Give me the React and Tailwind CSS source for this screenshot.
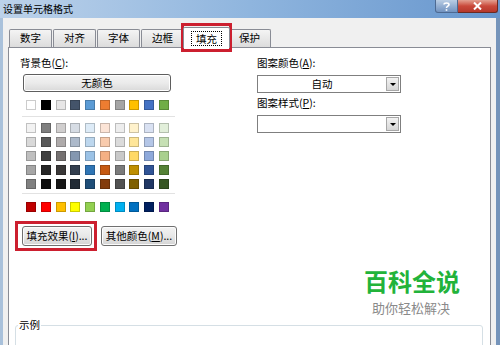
import React from "react";

const theme = ["bg-[#ffffff]", "bg-[#000000]", "bg-[#e7e6e6]", "bg-[#44546a]", "bg-[#5b9bd5]", "bg-[#ed7d31]", "bg-[#a5a5a5]", "bg-[#ffc000]", "bg-[#4472c4]", "bg-[#70ad47]"];
const shades = [
  "bg-[#f2f2f2]", "bg-[#7f7f7f]", "bg-[#d0cece]", "bg-[#d6dce4]", "bg-[#ddebf7]", "bg-[#fce4d6]", "bg-[#ededed]", "bg-[#fff2cc]", "bg-[#d9e1f2]", "bg-[#e2efda]",
  "bg-[#d9d9d9]", "bg-[#595959]", "bg-[#aeaaaa]", "bg-[#acb9ca]", "bg-[#bdd7ee]", "bg-[#f8cbad]", "bg-[#dbdbdb]", "bg-[#ffe699]", "bg-[#b4c6e7]", "bg-[#c6e0b4]",
  "bg-[#bfbfbf]", "bg-[#404040]", "bg-[#757171]", "bg-[#8497b0]", "bg-[#9bc2e6]", "bg-[#f4b084]", "bg-[#c9c9c9]", "bg-[#ffd966]", "bg-[#8ea9db]", "bg-[#a9d08e]",
  "bg-[#a6a6a6]", "bg-[#262626]", "bg-[#3a3838]", "bg-[#333f4f]", "bg-[#2f75b5]", "bg-[#c65911]", "bg-[#7b7b7b]", "bg-[#bf8f00]", "bg-[#305496]", "bg-[#548235]",
  "bg-[#808080]", "bg-[#0d0d0d]", "bg-[#161616]", "bg-[#222b35]", "bg-[#1f4e78]", "bg-[#833c0c]", "bg-[#525252]", "bg-[#806000]", "bg-[#203764]", "bg-[#375623]",
];
const standard = ["bg-[#c00000]", "bg-[#ff0000]", "bg-[#ffc000]", "bg-[#ffff00]", "bg-[#92d050]", "bg-[#00b050]", "bg-[#00b0f0]", "bg-[#0070c0]", "bg-[#002060]", "bg-[#7030a0]"];

function Swatches({ colors }) {
  return (
    <div className="ml-[6px] grid grid-cols-[repeat(10,10px)] gap-x-[4.78px] gap-y-[4px]">
      {colors.map((c, i) => (
        <div key={i} className={"h-[10px] w-[10px] border border-black/20 " + c} />
      ))}
    </div>
  );
}

function Tab({ label, selected }) {
  if (selected) {
    return (
      <div className="relative z-10 -mx-[2px] mb-[-1px] flex h-[21px] w-[47px] items-center justify-center rounded-t-[2px] border border-b-0 border-[#898c95] bg-white">
        <span className="border border-dotted border-black px-[4px] leading-[13px]">{label}</span>
      </div>
    );
  }
  return (
    <div className="mr-[1px] flex h-[18px] w-[43px] items-center justify-center rounded-t-[2px] border border-b-0 border-[#898c95] bg-gradient-to-b from-[#f4f4f4] to-[#dcdcdc] leading-none">
      {label}
    </div>
  );
}

function Dropdown({ value }) {
  return (
    <div className="flex h-[18px] w-[144px] border border-[#7f7f7f] bg-white">
      <div className="flex flex-1 items-center justify-center leading-none">{value}</div>
      <div className="my-[1px] mr-[1px] flex w-[13px] items-center justify-center border border-[#a7a7a7] bg-gradient-to-b from-[#f3f3f3] to-[#d6d6d6]">
        <div className="h-0 w-0 border-x-[3px] border-t-[3px] border-x-transparent border-t-black" />
      </div>
    </div>
  );
}

function Btn({ w, children }) {
  return (
    <div className={"flex h-[20px] items-center justify-center rounded-[3px] border border-[#707070] bg-gradient-to-b from-[#f3f3f3] via-[#e8e8e8] to-[#d4d4d4] leading-none shadow-[inset_0_0_0_1px_#fcfcfc] " + w}>
      {children}
    </div>
  );
}

export default function App() {
  return (
    <div className="relative flex h-[345px] w-[500px] flex-col overflow-hidden bg-[#f0f0f0] font-['Noto_Sans_CJK_SC',sans-serif] text-[10.5px] text-black">
      {/* Title bar */}
      <div className="flex h-[18px] shrink-0 items-start bg-gradient-to-r from-[#bcd2ea] via-[#8fb5de] to-[#6796cd]">
        <span className="ml-[3px] mt-[1px] text-[10px] leading-[16px]">设置单元格格式</span>
        <div className="ml-auto mr-[2px] flex h-[13px]">
          <div className="flex w-[23px] items-center justify-center rounded-bl-[3px] border border-t-0 border-[#4d6a92] bg-gradient-to-b from-[#b9cde4] to-[#7293c0]">
            <svg width="7" height="9" viewBox="0 0 7 9" fill="none" stroke="white" strokeWidth="1.6">
              <path d="M1 2.6 C1 0.4 6 0.4 6 2.6 C6 4.2 3.5 4 3.5 6" />
              <path d="M3.5 7.2 V8.8" />
            </svg>
          </div>
          <div className="flex w-[40px] items-center justify-center rounded-br-[3px] border border-l-0 border-t-0 border-[#6b2a22] bg-gradient-to-b from-[#e2a092] via-[#c9493b] to-[#b5382b]">
            <svg width="9" height="8" viewBox="0 0 9 8" stroke="white" strokeWidth="2">
              <path d="M1 0.5 L8 7.5 M8 0.5 L1 7.5" />
            </svg>
          </div>
        </div>
      </div>

      {/* Body */}
      <div className="flex flex-1 flex-col border-l-[3px] border-r-[4px] border-l-[#a9c1db] border-r-[#7594ba] pl-[5px] pr-[5px]">
        {/* Tabs */}
        <div className="mt-[9px] flex h-[20px] items-end pl-[1px]">
          <Tab label="数字" />
          <Tab label="对齐" />
          <Tab label="字体" />
          <Tab label="边框" />
          <Tab label="填充" selected />
          <Tab label="保护" />
        </div>

        {/* Panel */}
        <div className="flex flex-1 flex-col border border-b-0 border-[#898c95] bg-white">
          <div className="flex">
            {/* Left column */}
            <div className="flex w-[248px] flex-col pl-[11px] pt-[7px]">
              <div className="leading-[16px]">背景色(<span className="underline">C</span>):</div>
              <div className="ml-[3px] mt-[3px] flex h-[18px] w-[148px] items-center justify-center rounded-[3px] border border-[#5e5e5e] bg-gradient-to-b from-[#f4f4f4] via-[#ebebeb] to-[#d9d9d9] leading-none shadow-[inset_0_0_0_1px_#ffffff]">
                无颜色
              </div>
              <div className="mt-[8px]">
                <Swatches colors={theme} />
              </div>
              <div className="ml-[2px] mt-[6px] h-px w-[153px] bg-[#e2e2e2]" />
              <div className="mt-[6px]">
                <Swatches colors={shades} />
              </div>
              <div className="ml-[2px] mt-[4px] h-px w-[153px] bg-[#e2e2e2]" />
              <div className="mt-[8px]">
                <Swatches colors={standard} />
              </div>
              <div className="ml-[2px] mt-[14px] flex gap-[9px]">
                <Btn w="w-[70px]">填充效果(<span className="underline">I</span>)...</Btn>
                <Btn w="w-[76px]">其他颜色(<span className="underline">M</span>)...</Btn>
              </div>
            </div>

            {/* Right column */}
            <div className="flex flex-col pt-[7px]">
              <div className="leading-[16px]">图案颜色(<span className="underline">A</span>):</div>
              <div className="mt-[4px]">
                <Dropdown value="自动" />
              </div>
              <div className="mt-[2px] leading-[16px]">图案样式(<span className="underline">P</span>):</div>
              <div className="mt-[4px]">
                <Dropdown value="" />
              </div>
            </div>
          </div>

          {/* Sample group */}
          <fieldset className="ml-[6px] mr-[7px] mt-[71px] h-[60px] rounded-[3px] border border-[#d5dfe5]">
            <legend className="ml-[2px] px-[1px] leading-[16px]">示例</legend>
          </fieldset>
        </div>
      </div>

      {/* Highlight overlays */}
      <div className="pointer-events-none absolute left-[181px] top-[23px] h-[29px] w-[51px] border-[3px] border-[#cc1f2f]" />
      <div className="pointer-events-none absolute left-[15px] top-[221px] h-[30px] w-[82px] border-[3px] border-[#cc1f2f]" />

      {/* Watermark */}
      <div className="pointer-events-none absolute left-[364px] top-[267px] text-[24px] font-bold leading-[28px] text-[#22b33a]">百科全说</div>
      <div className="pointer-events-none absolute left-[372px] top-[300px] text-[13px] leading-[16px] text-[#8a8a8a]">助你轻松解决</div>
    </div>
  );
}
